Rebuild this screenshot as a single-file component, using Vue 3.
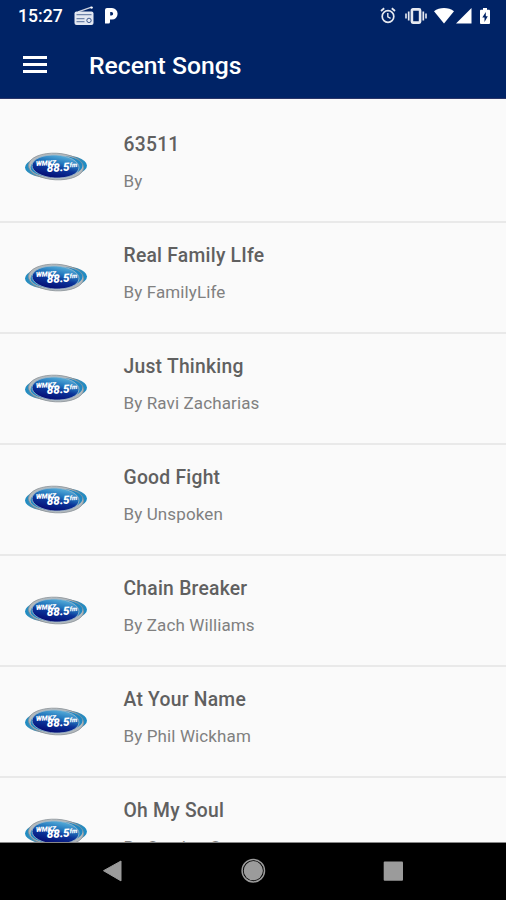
<script setup>
import { ref } from "vue";

const title = ref('Recent Songs')
const songs = ref([
  { name: '63511', artist: '' },
  { name: 'Real Family LIfe', artist: 'FamilyLife' },
  { name: 'Just Thinking', artist: 'Ravi Zacharias' },
  { name: 'Good Fight', artist: 'Unspoken' },
  { name: 'Chain Breaker', artist: 'Zach Williams' },
  { name: 'At Your Name', artist: 'Phil Wickham' },
  { name: 'Oh My Soul', artist: 'Casting Crowns' }
])
</script>

<template>
  <div class="phone">
    <header class="top">
      <!-- status bar -->
      <div class="status">
        <span class="clock">15:27</span>
        <svg class="radio" width="20" height="20" viewBox="0 0 20 20">
          <path d="M4 5.8L17.5 1.2" stroke="#fff" stroke-opacity=".8" stroke-width="1.4" />
          <circle cx="17.6" cy="1.6" r="1.2" fill="#fff" />
          <rect x=".5" y="5.5" width="19" height="13.5" rx="2" fill="#e3e8f2" />
          <path d="M2.5 8.6h15M2.5 12.6h8M2.5 15.6h8" stroke="#002366" stroke-opacity=".5" stroke-width="1.2" />
          <circle cx="15" cy="14.4" r="2.2" fill="none" stroke="#002366" stroke-opacity=".7" stroke-width="1" />
        </svg>
        <svg class="pandora" width="13" height="16" viewBox="0 0 13 16">
          <path fill="#fff" fill-rule="evenodd" d="M2 0h5a5.5 5.7 0 0 1 0 11.6H5V14a1.5 1.5 0 0 1-1.5 1.5H0V2a2 2 0 0 1 2-2zM5.2 4v3.5h1.2a1.75 1.75 0 0 0 0-3.5z" />
        </svg>
        <span class="space"></span>
        <svg class="alarm" width="16" height="17" viewBox="0 0 16 17" fill="none" stroke="#fff" stroke-opacity=".9">
          <circle cx="8" cy="9.5" r="5.8" stroke-width="1.7" />
          <path d="M1 4L4.2 1.2M15 4L11.8 1.2" stroke-width="1.8" />
          <path d="M7.8 6v3.8l2.8 1.5" stroke-width="1.4" />
        </svg>
        <svg class="vibrate" width="22" height="16" viewBox="0 0 22 16" fill="none" stroke="#fff" stroke-opacity=".9">
          <rect x="6.9" y="1.4" width="8.2" height="13.2" rx="1" stroke-width="2.6" />
          <path d="M3.7 3.5v9M18.3 3.5v9" stroke-width="1.7" />
          <path d="M1 5.5v5M21 5.5v5" stroke-width="1.6" />
        </svg>
        <svg class="wifi" width="20" height="16" viewBox="0 0 20 16">
          <path fill="#fff" d="M0 3.2C5.5-1 14.5-1 20 3.2L10 15.5z" />
        </svg>
        <svg class="signal" width="16" height="16" viewBox="0 0 16 16">
          <path fill="#fff" d="M0 15.5L15.5 0v15.5z" />
        </svg>
        <svg class="battery" width="10" height="16" viewBox="0 0 10 16">
          <path fill="#fff" d="M3 0h4v1.7h2a1 1 0 0 1 1 1V15a1 1 0 0 1-1 1H1a1 1 0 0 1-1-1V2.7a1 1 0 0 1 1-1h2z" />
          <path fill="#002366" d="M5.8 4L2.3 9.6h2.2V14l3.3-5.7H5.8z" />
        </svg>
      </div>
      <!-- toolbar -->
      <div class="toolbar">
        <button class="menu" aria-label="Menu"><i></i><i></i><i></i></button>
        <h1>{{ title }}</h1>
      </div>
    </header>

    <ul class="song-list">
      <li v-for="(item,index) in songs" :key="index">
        <svg class="logo" width="64" height="32" viewBox="0 0 64 32">
          <defs>
            <linearGradient :id="'rim'+index" x1="0" x2="1" y1="0" y2="0">
              <stop offset="0" stop-color="#168bc6" />
              <stop offset=".3" stop-color="#8f969c" />
              <stop offset=".65" stop-color="#80888e" />
              <stop offset="1" stop-color="#168cc9" />
            </linearGradient>
            <linearGradient :id="'face'+index" x1=".7" x2=".4" y1="0" y2="1">
              <stop offset="0" stop-color="#5bb2dc" />
              <stop offset=".35" stop-color="#2377bd" />
              <stop offset=".6" stop-color="#0b3499" />
              <stop offset="1" stop-color="#060b73" />
            </linearGradient>
          </defs>
          <ellipse cx="32" cy="15.5" rx="31" ry="12" :fill="`url(#rim${index})`" transform="rotate(-2 32 16)" />
          <ellipse cx="32" cy="15.5" rx="27.5" ry="13.3" fill="#b4b9bd" stroke="#8b9399" stroke-width=".8" transform="rotate(3 32 16)" />
          <ellipse cx="32.5" cy="15.5" rx="26" ry="10.8" fill="#2187c2" transform="rotate(-2 33 15.5)" />
          <ellipse cx="31.5" cy="15.5" rx="23.5" ry="11.5" :fill="`url(#face${index})`" stroke="#9fb9ca" stroke-width=".8" transform="rotate(3 31 16)" />
          <text class="logo-text" x="12" y="14" transform="rotate(-3 32 16)">
            <tspan font-size="7">WMKZ</tspan><tspan dx="-9.5" dy="6.5" font-size="11.5">88.5</tspan><tspan dy="-3.5" font-size="6.5">fm</tspan>
          </text>
        </svg>
        <div class="info">
          <div class="name">{{ item.name }}</div>
          <div class="artist">By {{ item.artist }}</div>
        </div>
      </li>
    </ul>

    <!-- android navigation -->
    <nav class="nav">
      <svg width="506" height="57" viewBox="0 0 506 57" fill="#9b9b9b">
        <path d="M103.5 27.7L121 18V37.9z" stroke="#9b9b9b" stroke-linejoin="round" />
        <circle cx="253.3" cy="27.7" r="11.2" fill="none" stroke="#9b9b9b" stroke-width="1.5" />
        <circle cx="253.3" cy="27.7" r="9.6" />
        <rect x="383.7" y="18.5" width="19.3" height="19.3" rx="1" />
      </svg>
    </nav>
  </div>
</template>

<style>
body {
  margin: 0;
}
</style>

<style scoped>
.phone {
  width: 506px;
  height: 900px;
  display: flex;
  flex-direction: column;
  overflow: hidden;
  background: #fafafa;
  font-family: Roboto, sans-serif;
}

.top {
  height: 99px;
  flex: none;
  background: #002366;
  color: #fff;
  box-sizing: border-box;
  border-bottom: 1px solid #2a3568;
}

.status {
  height: 32px;
  display: flex;
  align-items: center;
  padding: 0 16px 0 18px;
}

.clock {
  font-size: 17.6px;
  font-weight: 500;
  width: 44px;
}

.radio {
  margin-left: 12px;
  margin-top: -1px;
}

.pandora {
  margin-left: 11px;
}

.space {
  flex: 1;
}

.alarm {
  margin-right: 9px;
  margin-top: -1px;
}

.vibrate {
  margin-right: 7px;
  margin-top: -1px;
}

.wifi {
  margin-right: 2px;
}

.signal {
  margin-right: 8px;
  margin-top: -1px;
}

.battery {
  margin-top: -1px;
}

.toolbar {
  height: 66px;
  display: flex;
  align-items: center;
}

.menu {
  width: 24px;
  margin-left: 23px;
  margin-top: -2px;
  padding: 0;
  border: 0;
  background: none;
  display: flex;
  flex-direction: column;
  gap: 4px;
}

.menu i {
  height: 3px;
  background: #fff;
}

h1 {
  margin: 1px 0 0 42px;
  font-size: 24.7px;
  font-weight: 500;
  line-height: 32px;
}

.song-list {
  flex: 1;
  min-height: 0;
  overflow: hidden;
  list-style: none;
  margin: 0;
  padding: 13px 0 0;
}

.song-list li {
  height: 111px;
  box-sizing: border-box;
  display: flex;
  align-items: center;
  padding-left: 24px;
  border-bottom: 2px solid #e9e9e9;
}

.logo-text {
  fill: #fff;
  font-family: Roboto, sans-serif;
  font-weight: 900;
  font-style: italic;
}

.info {
  margin-left: 35.5px;
  padding: 1px 0 9px;
}

.name {
  color: #606060;
  font-size: 19.3px;
  font-weight: 500;
  line-height: 24px;
  letter-spacing: 0.25px;
}

.artist {
  margin-top: 13px;
  color: #808080;
  font-size: 17px;
  line-height: 22px;
  letter-spacing: 0.12px;
}

.nav {
  height: 58px;
  flex: none;
  background: #000;
  border-top: 1px solid #888;
  box-sizing: border-box;
}

.nav svg {
  display: block;
}
</style>
